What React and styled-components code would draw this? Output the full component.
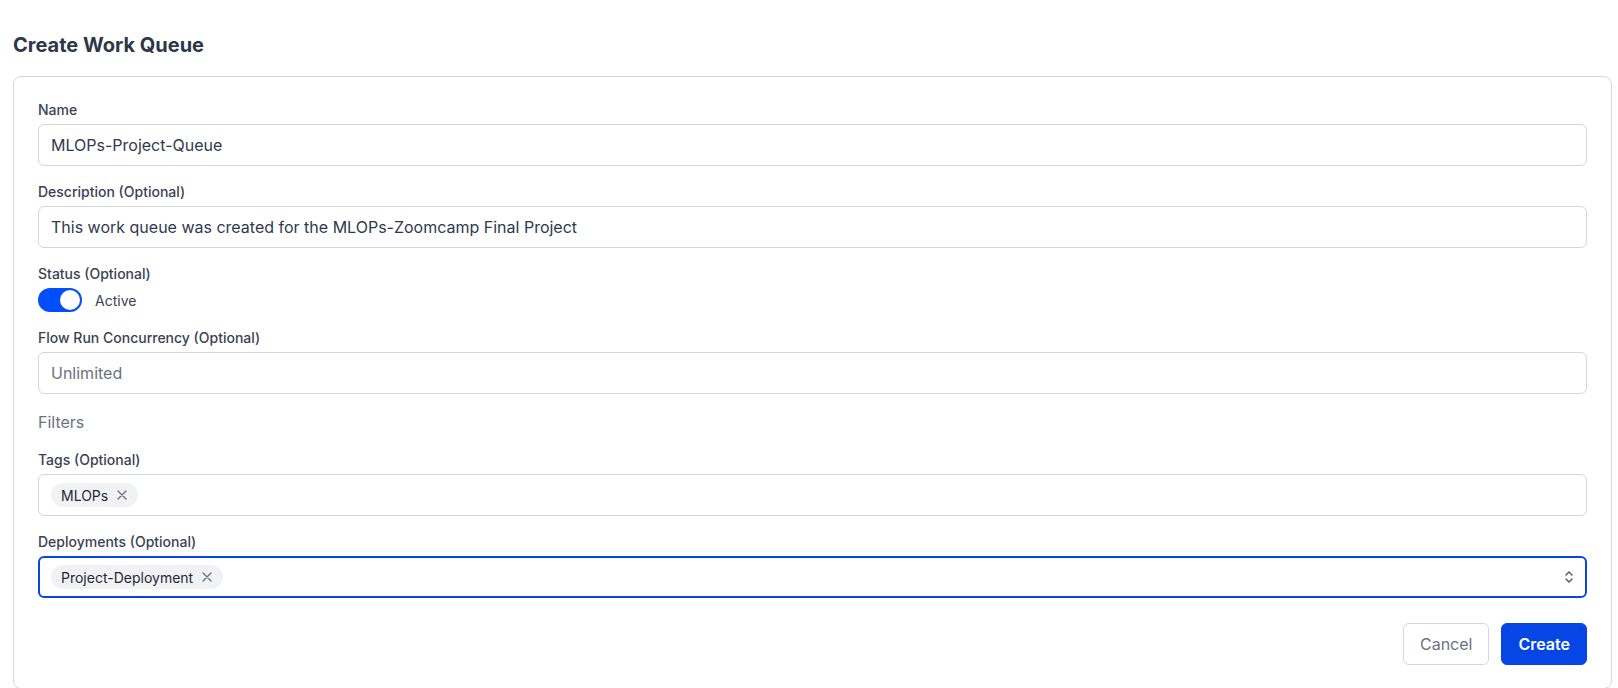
import React from "react";
import styled, { createGlobalStyle } from "styled-components";

const Global = createGlobalStyle`
  * { box-sizing: border-box; }
  html, body { margin: 0; padding: 0; background: #ffffff; }
  body { font-family: Inter, "Noto Sans", sans-serif; color: #334155; }
`;

const Page = styled.div`
  padding: 31px 6px 0 13px;
`;

const Title = styled.h1`
  margin: 0 0 17px;
  font-size: 20px;
  line-height: 28px;
  font-weight: 700;
  color: #2d3748;
`;

const Card = styled.div`
  border: 1px solid #d6d7dd;
  border-radius: 8px;
  padding: 23px 24px 23px 24px;
  display: flex;
  flex-direction: column;
  gap: 16px;
`;

const Field = styled.div`
  display: flex;
  flex-direction: column;
  gap: 4px;
`;

const Label = styled.label`
  font-size: 14px;
  line-height: 20px;
  font-weight: 500;
  color: #3b4252;
`;

const Input = styled.div`
  height: 42px;
  border: ${(p) => (p.$focused ? "2px solid #0546e5" : "1px solid #d4d6dd")};
  border-radius: 6px;
  padding: 0 ${(p) => (p.$focused ? "11px" : "12px")};
  display: flex;
  align-items: center;
  gap: 8px;
  font-size: 16px;
  color: ${(p) => (p.$placeholder ? "#6b7280" : "#2f3a4f")};
`;

const Chip = styled.span`
  display: inline-flex;
  align-items: center;
  gap: 9px;
  height: 24px;
  padding: 0 11px 0 10px;
  border-radius: 12px;
  background: #f1f2f4;
  font-size: 14px;
  color: #1f2937;
`;

const Grow = styled.div`
  flex: 1;
`;

const ToggleRow = styled.div`
  display: flex;
  align-items: center;
  gap: 13px;
  font-size: 14px;
  color: #3b4252;
`;

const Track = styled.span`
  width: 44px;
  height: 24px;
  border-radius: 12px;
  background: #024dfd;
  display: flex;
  align-items: center;
  justify-content: flex-end;
  padding: 2px;
`;

const Knob = styled.span`
  width: 20px;
  height: 20px;
  border-radius: 50%;
  background: #ffffff;
`;

const Section = styled.div`
  font-size: 16px;
  line-height: 24px;
  color: #6b7280;
`;

const Actions = styled.div`
  display: flex;
  justify-content: flex-end;
  gap: 12px;
  margin-top: 9px;
`;

const Button = styled.button`
  height: 42px;
  padding: 0 16px;
  border-radius: 6px;
  font-family: Inter, sans-serif;
  font-size: 16px;
  cursor: pointer;
  border: 1px solid ${(p) => (p.$primary ? "#0546e5" : "#d4d6dd")};
  background: ${(p) => (p.$primary ? "#0546e5" : "#ffffff")};
  color: ${(p) => (p.$primary ? "#ffffff" : "#6b7280")};
  font-weight: ${(p) => (p.$primary ? 600 : 400)};
`;

const XIcon = () => (
  <svg width="10" height="10" viewBox="0 0 10 10" fill="none" stroke="#6b7280" strokeWidth="1.4" strokeLinecap="round">
    <path d="M1 1L9 9M9 1L1 9" />
  </svg>
);

const Selector = () => (
  <svg width="10" height="14" viewBox="0 0 10 14" fill="none" stroke="#4b5563" strokeWidth="1.4" strokeLinecap="round" strokeLinejoin="round">
    <path d="M2 5L5 2L8 5M2 9L5 12L8 9" />
  </svg>
);

export default function App() {
  return (
    <Page>
      <Global />
      <Title>Create Work Queue</Title>
      <Card>
        <Field>
          <Label>Name</Label>
          <Input>MLOPs-Project-Queue</Input>
        </Field>
        <Field>
          <Label>Description (Optional)</Label>
          <Input>This work queue was created for the MLOPs-Zoomcamp Final Project</Input>
        </Field>
        <Field>
          <Label>Status (Optional)</Label>
          <ToggleRow>
            <Track>
              <Knob />
            </Track>
            Active
          </ToggleRow>
        </Field>
        <Field>
          <Label>Flow Run Concurrency (Optional)</Label>
          <Input $placeholder>Unlimited</Input>
        </Field>
        <Section>Filters</Section>
        <Field>
          <Label>Tags (Optional)</Label>
          <Input>
            <Chip>
              MLOPs
              <XIcon />
            </Chip>
          </Input>
        </Field>
        <Field>
          <Label>Deployments (Optional)</Label>
          <Input $focused>
            <Chip>
              Project-Deployment
              <XIcon />
            </Chip>
            <Grow />
            <Selector />
          </Input>
        </Field>
        <Actions>
          <Button>Cancel</Button>
          <Button $primary>Create</Button>
        </Actions>
      </Card>
    </Page>
  );
}
